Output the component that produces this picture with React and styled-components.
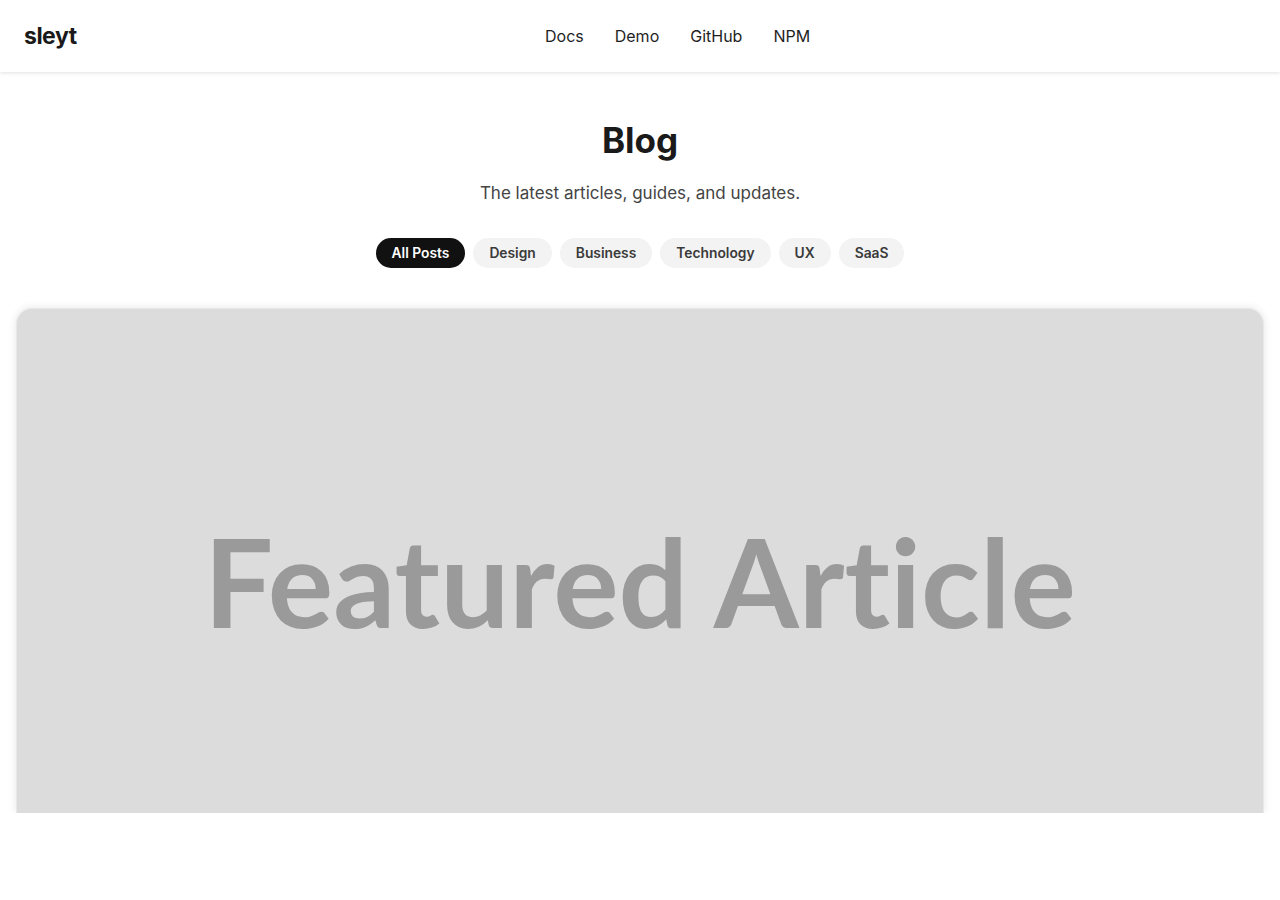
import React from 'react'
import styled, { createGlobalStyle } from 'styled-components'

const GlobalStyle = createGlobalStyle`
    body {
        margin: 0;
        background: #fff;
        font-family: Inter, "Noto Sans", sans-serif;
        color: #1a1a1a;
    }
`

const Header = styled.header`
    height: 72px;
    display: flex;
    align-items: center;
    padding: 0 24px;
    background: #fff;
    box-shadow: 0 1px 4px rgba(0, 0, 0, 0.12);
    position: relative;
    z-index: 2;
`

const Logo = styled.div`
    font-size: 23px;
    font-weight: 700;
    letter-spacing: -0.5px;
    color: #1a1a1a;
    width: 52px;
`

const Nav = styled.nav`
    display: flex;
    gap: 31px;
    margin-left: 469px;
`

const NavLink = styled.a`
    font-size: 16px;
    color: #1f1f1f;
    text-decoration: none;
`

const Main = styled.main`
    padding: 48px 16px 0;
    display: flex;
    flex-direction: column;
    align-items: center;
`

const Title = styled.h1`
    margin: 0;
    font-size: 35px;
    font-weight: 700;
    line-height: 40px;
    color: #1a1a1a;
`

const Subtitle = styled.p`
    margin: 19px 0 0;
    font-size: 17px;
    line-height: 28px;
    color: #444;
`

const Pills = styled.div`
    display: flex;
    gap: 8px;
    margin-top: 31px;
`

const Pill = styled.button`
    border: none;
    height: 30px;
    padding: 0 16px;
    border-radius: 15px;
    font-family: inherit;
    font-size: 13.8px;
    font-weight: 600;
    cursor: pointer;
    background: ${p => (p.$active ? '#111' : '#f3f3f3')};
    color: ${p => (p.$active ? '#fff' : '#3a3a3a')};
`

const Card = styled.div`
    margin-top: 40px;
    align-self: stretch;
    height: 504px;
    background: #dcdcdc;
    border: 1px solid #e8e8e8;
    border-bottom: none;
    border-radius: 16px 16px 0 0;
    box-shadow: 0 0 8px rgba(0, 0, 0, 0.1);
    display: flex;
    align-items: center;
    justify-content: center;
    overflow: hidden;
`

const CardText = styled.span`
    font-family: Lato, "Open Sans", sans-serif;
    font-weight: 700;
    font-size: 122.5px;
    font-variant-ligatures: none;
    color: #9a9a9a;
    margin-top: 38px;
    white-space: nowrap;
`

const categories = ['All Posts', 'Design', 'Business', 'Technology', 'UX', 'SaaS']

const App = () => {
    return (
        <>
            <GlobalStyle />
            <Header>
                <Logo>sleyt</Logo>
                <Nav>
                    <NavLink href="#">Docs</NavLink>
                    <NavLink href="#">Demo</NavLink>
                    <NavLink href="#">GitHub</NavLink>
                    <NavLink href="#">NPM</NavLink>
                </Nav>
            </Header>
            <Main>
                <Title>Blog</Title>
                <Subtitle>The latest articles, guides, and updates.</Subtitle>
                <Pills>
                    {categories.map((c, i) => (
                        <Pill key={c} $active={i === 0}>{c}</Pill>
                    ))}
                </Pills>
                <Card>
                    <CardText>Featured Article</CardText>
                </Card>
            </Main>
        </>
    )
}

export default App
